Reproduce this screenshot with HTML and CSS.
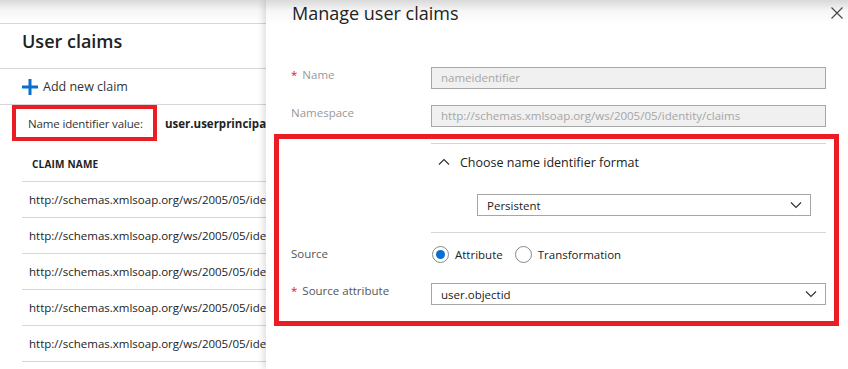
FILE: index.html
```html
<!DOCTYPE html>
<html lang="en">
<head>
  <meta charset="UTF-8" />
  <title>Manage user claims</title>
  <link rel="stylesheet" href="styles.css">
</head>
<body>
  <div id="page">
    <div class="claims-pane">
      <div class="top-fade"></div>
      <h2 class="pane-title">User claims</h2>
      <div class="toolbar">
        <span class="plus">
          <svg width="16" height="16" viewBox="0 0 16 16"><path d="M6.5 0h3v6.5H16v3H9.5V16h-3V9.5H0v-3h6.5z" fill="#0a6ed1"/></svg>
        </span>
        Add new claim
      </div>
      <div class="nameid-row">
        <span class="nameid-label">Name identifier value:</span>
        <span class="nameid-value">user.userprincipalname</span>
      </div>
      <div class="claim-head">CLAIM NAME</div>
      <ul class="claim-list">
        <li>http://schemas.xmlsoap.org/ws/2005/05/identity/claims/givenname</li>
        <li>http://schemas.xmlsoap.org/ws/2005/05/identity/claims/surname</li>
        <li>http://schemas.xmlsoap.org/ws/2005/05/identity/claims/emailaddress</li>
        <li>http://schemas.xmlsoap.org/ws/2005/05/identity/claims/name</li>
        <li>http://schemas.xmlsoap.org/ws/2005/05/identity/claims/upn</li>
      </ul>
    </div>

    <div class="manage-pane">
      <div class="top-fade"></div>
      <div class="manage-head">
        <h2>Manage user claims</h2>
        <button class="close-btn" aria-label="Close">
          <svg width="12" height="12" viewBox="0 0 12 12"><path d="M0.5 0.5L11.5 11.5M11.5 0.5L0.5 11.5" stroke="#444" stroke-width="1.1"/></svg>
        </button>
      </div>

      <div class="form">
        <div class="form-row first">
          <label class="lbl disabled"><span class="req">*</span>Name</label>
          <div class="field disabled">nameidentifier</div>
        </div>
        <div class="form-row">
          <label class="lbl disabled">Namespace</label>
          <div class="field disabled">http://schemas.xmlsoap.org/ws/2005/05/identity/claims</div>
        </div>

        <div class="highlight">
          <div class="format-block">
            <div class="format-toggle">
              <svg width="12" height="8" viewBox="0 0 12 8"><path d="M1 6.5L6 1.5L11 6.5" stroke="#333" stroke-width="1.2" fill="none"/></svg>
              Choose name identifier format
            </div>
            <div class="select format-select">
              <span>Persistent</span>
              <svg width="12" height="8" viewBox="0 0 12 8"><path d="M1 1.5L6 6.5L11 1.5" stroke="#333" stroke-width="1.2" fill="none"/></svg>
            </div>
          </div>

          <div class="form-row source-row">
            <label class="lbl">Source</label>
            <div class="radios">
              <span class="radio checked"></span><span class="radio-text">Attribute</span>
              <span class="radio"></span><span class="radio-text">Transformation</span>
            </div>
          </div>
          <div class="form-row attr-row">
            <label class="lbl"><span class="req">*</span>Source attribute</label>
            <div class="select">
              <span>user.objectid</span>
              <svg width="12" height="8" viewBox="0 0 12 8"><path d="M1 1.5L6 6.5L11 1.5" stroke="#333" stroke-width="1.2" fill="none"/></svg>
            </div>
          </div>
        </div>
      </div>
    </div>
  </div>
</body>
</html>
```

FILE: styles.css
```css
* {
  box-sizing: border-box;
  margin: 0;
  padding: 0;
}

html, body {
  height: 100%;
  background: #fff;
  font-family: 'Open Sans', 'Noto Sans', sans-serif;
  font-size: 11.5px;
  color: #222;
  overflow: hidden;
}

#page {
  display: flex;
  height: 369px;
}

.top-fade {
  height: 24px;
  background: linear-gradient(to bottom, #d9d9d9, #f6f6f6 45%, #fff);
}

/* left pane */
.claims-pane {
  width: 266px;
  flex-shrink: 0;
  overflow: hidden;
  white-space: nowrap;
}

.claims-pane .top-fade {
  border-bottom: 1px solid #d6d6d6;
}

.pane-title {
  height: 45px;
  padding: 2px 0 0 22px;
  font-size: 18px;
  font-weight: 600;
  line-height: 30px;
  border-bottom: 1px solid #d6d6d6;
}

.toolbar {
  height: 36px;
  display: flex;
  align-items: center;
  gap: 5px;
  padding-left: 22px;
  font-size: 12.5px;
  color: #333;
  border-bottom: 1px solid #d6d6d6;
}

.plus {
  display: flex;
  width: 16px;
  height: 16px;
}

.nameid-row {
  height: 36px;
  display: flex;
  align-items: center;
}

.nameid-label {
  flex-shrink: 0;
  display: flex;
  align-items: center;
  height: 36px;
  width: 145px;
  margin-left: 12px;
  padding-left: 12px;
  border: 4px solid #ec1c24;
  color: #333;
  letter-spacing: -0.15px;
}

.nameid-value {
  margin-left: 8px;
  font-weight: 700;
}

.claim-head {
  height: 41px;
  padding: 16px 0 0 10px;
  margin-left: 22px;
  font-size: 10px;
  font-weight: 700;
  letter-spacing: 0.2px;
  border-bottom: 1px solid #d6d6d6;
}

.claim-list {
  list-style: none;
  margin-left: 22px;
}

.claim-list li {
  height: 36px;
  line-height: 35px;
  padding-left: 7px;
  border-bottom: 1px solid #d6d6d6;
  color: #222;
}

/* right pane */
.manage-pane {
  flex: 1;
  position: relative;
  background: #fff;
  box-shadow: -3px 0 6px rgba(0, 0, 0, 0.12);
}

.manage-pane .top-fade {
  position: absolute;
  top: 0;
  left: 0;
  right: 0;
  z-index: 0;
}

.manage-head {
  position: relative;
  z-index: 1;
  display: flex;
  justify-content: space-between;
  align-items: flex-start;
  padding: 1px 5px 0 26px;
}

.manage-head h2 {
  font-size: 18px;
  font-weight: 400;
  line-height: 24px;
}

.close-btn {
  background: none;
  border: none;
  padding: 6px 0;
  cursor: pointer;
  display: flex;
}

.form {
  padding: 0 22px 0 25px;
}

.form-row {
  display: grid;
  grid-template-columns: 140px 1fr;
  align-items: start;
  margin-top: 16px;
}

.form-row.first {
  margin-top: 42px;
}

.lbl {
  color: #555;
  line-height: 16px;
}

.lbl.disabled {
  color: #999;
}

.req {
  color: #e81123;
  margin-right: 5px;
}

.field {
  height: 22px;
  line-height: 20px;
  padding-left: 9px;
  border: 1px solid #a6a6a6;
}

.field.disabled {
  background: #f0f0f0;
  color: #a6a6a6;
}

.highlight {
  margin: 7px -13px 0 -17px;
  padding: 4px 8px 16px 12px;
  border: 5px solid #ec1c24;
}

.format-block {
  margin-left: 140px;
  border-top: 1px solid #d6d6d6;
  border-bottom: 1px solid #d6d6d6;
  padding: 9px 0 16px;
}

.format-toggle {
  display: flex;
  align-items: center;
  gap: 10px;
  padding-left: 7px;
  font-size: 12.5px;
  color: #222;
  height: 18px;
}

.select {
  height: 22px;
  display: flex;
  align-items: center;
  justify-content: space-between;
  padding: 0 8px 0 9px;
  border: 1px solid #a6a6a6;
  color: #222;
}

.format-select {
  margin: 23px 15px 0 46px;
}

.source-row {
  margin-top: 11px;
  align-items: center;
}

.radios {
  display: flex;
  align-items: center;
  height: 20px;
}

.radio {
  width: 17px;
  height: 17px;
  border-radius: 50%;
  border: 1px solid #888;
  margin-left: 1px;
  position: relative;
}

.radio.checked::after {
  content: "";
  position: absolute;
  left: 3px;
  top: 3px;
  width: 9px;
  height: 9px;
  border-radius: 50%;
  background: #0a6ed1;
}

.radio-text {
  margin-left: 6px;
  margin-right: 11px;
  color: #222;
}

.attr-row {
  margin-top: 19px;
}
```
